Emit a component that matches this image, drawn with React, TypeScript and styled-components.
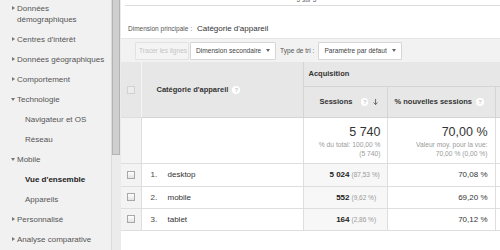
import React from "react";
import styled, {createGlobalStyle} from "styled-components";

const GlobalStyle = createGlobalStyle`
	html, body {
		margin: 0;
		padding: 0;
		background: #ffffff;
	}
	body {
		font-family: "Liberation Sans", Arial, sans-serif;
		color: #333333;
	}
`;

const Page = styled.div`
	display: flex;
	width: 500px;
	height: 250px;
	overflow: hidden;
	background: #ffffff;
`;

/* ---------- sidebar ---------- */

const Sidebar = styled.nav`
	width: 111px;
	flex: none;
	background: #f1f1f1;
	overflow: hidden;
`;

const MenuList = styled.ul`
	list-style: none;
	margin: -2px 0 0;
	padding: 0;
`;

const MenuItem = styled.li<{level?: number; active?: boolean}>`
	position: relative;
	padding: 4.5px 4px 4.5px ${({level = 0}) => (level ? 25 : 17)}px;
	font-size: 8px;
	line-height: 11px;
	color: ${({active}) => (active ? "#222222" : "#555555")};
	font-weight: ${({active}) => (active ? 700 : 400)};
	white-space: nowrap;
`;

const Caret = styled.span<{open?: boolean}>`
	position: absolute;
	left: ${({open}) => (open ? 11 : 12)}px;
	top: ${({open}) => (open ? 9 : 8)}px;
	width: 0;
	height: 0;
	border-style: solid;
	border-color: transparent;
	${({open}) =>
		open
			? `border-width: 3px 2.5px 0 2.5px; border-top-color: #777777;`
			: `border-width: 2.5px 0 2.5px 3px; border-left-color: #777777;`}
`;

const Scrollbar = styled.div`
	width: 10px;
	flex: none;
	background: #ebebeb;
	border-left: 1px solid #dadada;
	box-sizing: border-box;
`;

const Thumb = styled.div`
	height: 155px;
	margin: 0 1px 0 0;
	background: #cfcfcf;
	border: 1px solid #b3b3b3;
	border-top: none;
	box-sizing: border-box;
`;

/* ---------- main ---------- */

const Main = styled.main`
	flex: 1;
	min-width: 0;
	display: flex;
	flex-direction: column;
	overflow: hidden;
`;

const TopStrip = styled.div`
	height: 5px;
	margin-left: 4px;
	border-bottom: 1px solid #dddddd;
	overflow: hidden;
	text-align: center;
	padding-right: 12px;
`;

const TopText = styled.span`
	display: block;
	margin-top: -4px;
	font-size: 6.5px;
	line-height: 7px;
	color: #666666;
`;

const PrimaryDimension = styled.div`
	height: 32px;
	display: flex;
	align-items: flex-end;
	padding: 0 0 4px 7px;
	box-sizing: border-box;
	line-height: 10px;
`;

const DimLabel = styled.span`
	font-size: 6.5px;
	color: #555555;
	margin-right: 5px;
`;

const DimValue = styled.span`
	font-size: 8px;
	color: #333333;
`;

const Toolbar = styled.div`
	height: 24px;
	display: flex;
	align-items: center;
	gap: 1px;
	padding-left: 14px;
	background: #f2f2f2;
	border-top: 1px solid #e6e6e6;
	box-sizing: border-box;
`;

const ToolButton = styled.div<{disabled?: boolean; w: number}>`
	width: ${({w}) => w}px;
	height: 18px;
	box-sizing: border-box;
	display: flex;
	align-items: center;
	padding: 0 ${({disabled}) => (disabled ? 3 : 5)}px;
	font-size: 6.6px;
	color: ${({disabled}) => (disabled ? "#c4c4c4" : "#444444")};
	background: ${({disabled}) => (disabled ? "#f4f4f4" : "#ffffff")};
	border: 1px solid ${({disabled}) => (disabled ? "#e2e2e2" : "#d6d6d6")};
	border-radius: 1px;
	white-space: nowrap;
	overflow: hidden;
`;

const DropArrow = styled.span`
	margin-left: auto;
	flex: none;
	width: 0;
	height: 0;
	border-style: solid;
	border-color: #666666 transparent transparent transparent;
	border-width: 3px 2.5px 0 2.5px;
`;

const ToolLabel = styled.span`
	font-size: 6.6px;
	color: #555555;
	margin: 0 3px 0 3px;
	white-space: nowrap;
`;

/* ---------- table ---------- */

const Table = styled.table`
	border-collapse: collapse;
	table-layout: fixed;
	width: 420px;
	font-size: 8px;
	color: #333333;
`;

const HeadCell = styled.th<{h?: number; pl?: number}>`
	background: #e7e7e7;
	height: ${({h}) => (h ? `${h}px` : "auto")};
	padding: 0 0 0 ${({pl = 5}) => pl}px;
	text-align: left;
	font-weight: 700;
	font-size: 7.5px;
	color: #333333;
	border-left: 1px solid #d4d4d4;
	border-bottom: 1px solid #d4d4d4;
	box-sizing: border-box;
	white-space: nowrap;
	vertical-align: middle;
`;

const HeadFlex = styled.div`
	display: flex;
	align-items: center;
	gap: 5px;
	padding-right: 8px;
`;

const Help = styled.span`
	display: inline-flex;
	align-items: center;
	justify-content: center;
	width: 8px;
	height: 8px;
	border-radius: 50%;
	background: #ffffff;
	color: #c8c8c8;
	font-size: 6px;
	font-weight: 700;
	line-height: 8px;
	margin-left: 4px;
`;

const SortArrow = styled.svg`
	margin-left: auto;
	width: 6px;
	height: 8px;
`;

const CheckCell = styled.td<{head?: boolean}>`
	background: ${({head}) => (head ? "#e7e7e7" : "#f3f3f3")};
	border-right: 1px solid ${({head}) => (head ? "#f4f4f4" : "#dedede")};
	border-bottom: 1px solid #dedede;
	text-align: center;
	vertical-align: middle;
	padding: 0;
`;

const Checkbox = styled.span<{faint?: boolean}>`
	display: inline-block;
	width: 8px;
	height: 8px;
	box-sizing: border-box;
	border: 1px solid ${({faint}) => (faint ? "#d2d2d2" : "#a8a8a8")};
	background: ${({faint}) => (faint ? "#ececec" : "linear-gradient(#ffffff, #e4e4e4)")};
	vertical-align: middle;
`;

const Row = styled.tr<{h: number}>`
	height: ${({h}) => h}px;
`;

const Cell = styled.td<{sorted?: boolean; align?: string; top?: boolean; pr?: number}>`
	background: ${({sorted}) => (sorted ? "#f7f7f7" : "#ffffff")};
	border-left: 1px solid #dedede;
	border-bottom: 1px solid #dedede;
	text-align: ${({align = "left"}) => align};
	vertical-align: ${({top}) => (top ? "top" : "middle")};
	padding: 0 ${({pr = 6}) => pr}px 0 0;
	white-space: nowrap;
`;

const Index = styled.span`
	display: inline-block;
	width: 17px;
	margin-left: 9px;
	color: #444444;
`;

const Label = styled.span`
	color: #333333;
`;

const Count = styled.span`
	font-weight: 700;
	color: #222222;
`;

const Share = styled.span`
	display: inline-block;
	width: 31px;
	margin-left: 2px;
	text-align: left;
	font-size: 6.5px;
	color: #9a9a9a;
`;

const TotalBig = styled.div`
	font-size: 12.5px;
	line-height: 14px;
	margin-top: 7px;
	color: #333333;
`;

const TotalSub = styled.div`
	font-size: 6.7px;
	line-height: 9px;
	margin-top: 1px;
	color: #9a9a9a;
`;

type DataRow = {n: number; name: string; sessions: string; share: string; rate: string};

const rows: DataRow[] = [
	{n: 1, name: "desktop", sessions: "5 024", share: "(87,53 %)", rate: "70,08 %"},
	{n: 2, name: "mobile", sessions: "552", share: "(9,62 %)", rate: "69,20 %"},
	{n: 3, name: "tablet", sessions: "164", share: "(2,86 %)", rate: "70,12 %"}
];

const sidebarItems: {label: string; level?: number; caret?: "open" | "closed"; active?: boolean}[] = [
	{label: "Données\ndémographiques", caret: "closed"},
	{label: "Centres d'intérêt", caret: "closed"},
	{label: "Données géographiques", caret: "closed"},
	{label: "Comportement", caret: "closed"},
	{label: "Technologie", caret: "open"},
	{label: "Navigateur et OS", level: 1},
	{label: "Réseau", level: 1},
	{label: "Mobile", caret: "open"},
	{label: "Vue d'ensemble", level: 1, active: true},
	{label: "Appareils", level: 1},
	{label: "Personnalisé", caret: "closed"},
	{label: "Analyse comparative", caret: "closed"}
];

const App: React.FC = () => {
	return (
		<>
			<GlobalStyle />
			<Page>
				<Sidebar>
					<MenuList>
						{sidebarItems.map((item) => (
							<MenuItem key={item.label} level={item.level} active={item.active}>
								{item.caret && <Caret open={item.caret === "open"} />}
								{item.label.split("\n").map((line) => (
									<div key={line}>{line}</div>
								))}
							</MenuItem>
						))}
					</MenuList>
				</Sidebar>
				<Scrollbar>
					<Thumb />
				</Scrollbar>
				<Main>
					<TopStrip>
						<TopText>5 sur 5</TopText>
					</TopStrip>
					<PrimaryDimension>
						<DimLabel>Dimension principale :</DimLabel>
						<DimValue>Catégorie d'appareil</DimValue>
					</PrimaryDimension>
					<Toolbar>
						<ToolButton w={54} disabled>
							Tracer les lignes
						</ToolButton>
						<ToolButton w={86}>
							Dimension secondaire
							<DropArrow />
						</ToolButton>
						<ToolLabel>Type de tri :</ToolLabel>
						<ToolButton w={84}>
							Paramètre par défaut
							<DropArrow />
						</ToolButton>
					</Toolbar>
					<Table>
						<colgroup>
							<col style={{width: 20}} />
							<col style={{width: 162}} />
							<col style={{width: 84}} />
							<col style={{width: 108}} />
							<col style={{width: 46}} />
						</colgroup>
						<thead>
							<tr style={{height: 24}}>
								<CheckCell head rowSpan={2}>
									<Checkbox faint />
								</CheckCell>
								<HeadCell rowSpan={2} pl={15} style={{borderLeft: "none"}}>
									Catégorie d'appareil
									<Help>?</Help>
								</HeadCell>
								<HeadCell colSpan={3}>Acquisition</HeadCell>
							</tr>
							<tr style={{height: 31}}>
								<HeadCell pl={16}>
									<HeadFlex>
										Sessions
										<Help>?</Help>
										<SortArrow viewBox="0 0 6 8">
											<path d="M3 0.5V7M0.8 4.6L3 7L5.2 4.6" stroke="#555" strokeWidth="1" fill="none" />
										</SortArrow>
									</HeadFlex>
								</HeadCell>
								<HeadCell pl={7}>
									% nouvelles sessions
									<Help>?</Help>
								</HeadCell>
								<HeadCell />
							</tr>
						</thead>
						<tbody>
							<Row h={46}>
								<CheckCell />
								<Cell style={{borderLeft: "none"}} />
								<Cell top align="right" pr={6}>
									<TotalBig>5 740</TotalBig>
									<TotalSub>
										% du total: 100,00 %
										<br />
										(5 740)
									</TotalSub>
								</Cell>
								<Cell top align="right" pr={7}>
									<TotalBig>70,00 %</TotalBig>
									<TotalSub>
										Valeur moy. pour la vue:
										<br />
										70,00 % (0,00 %)
									</TotalSub>
								</Cell>
								<Cell />
							</Row>
							{rows.map((r, i) => (
								<Row key={r.n} h={i === 0 ? 23 : 22}>
									<CheckCell>
										<Checkbox />
									</CheckCell>
									<Cell style={{borderLeft: "none"}}>
										<Index>{r.n}.</Index>
										<Label>{r.name}</Label>
									</Cell>
									<Cell sorted align="right" pr={4}>
										<Count>{r.sessions}</Count>
										<Share>{r.share}</Share>
									</Cell>
									<Cell align="right" pr={7}>
										{r.rate}
									</Cell>
									<Cell />
								</Row>
							))}
						</tbody>
					</Table>
				</Main>
			</Page>
		</>
	);
};

export default App;
